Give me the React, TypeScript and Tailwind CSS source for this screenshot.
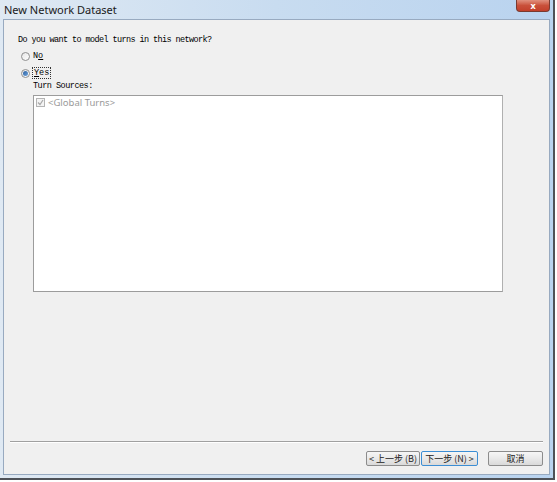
import React from "react";

const mono = { fontFamily: '"Liberation Mono", "DejaVu Sans Mono", monospace' };
const cjk = { fontFamily: '"Noto Sans CJK SC", "Noto Sans", sans-serif' };
const ui = { fontFamily: '"Noto Sans", "Open Sans", "Liberation Sans", sans-serif' };

function Radio({ checked }: { checked?: boolean }) {
  return (
    <div className="w-[9px] h-[9px] rounded-full border border-[#8f8f8f] bg-gradient-to-br from-[#e6e6e6] to-[#ffffff] flex items-center justify-center">
      {checked && <div className="w-[5px] h-[5px] rounded-full bg-gradient-to-br from-[#2a5fa0] to-[#6fa4dc]" />}
    </div>
  );
}

function Btn({ children, focused, w }: { children: React.ReactNode; focused?: boolean; w: string }) {
  return (
    <div
      className={`${w} h-[15px] rounded-[2px] border ${focused ? "border-[#3c8ed4]" : "border-[#8c8c8c]"} bg-gradient-to-b from-[#f6f6f6] via-[#e9e9e9] to-[#d9d9d9] flex items-center justify-center text-[9px] text-[#222] leading-none`}
      style={cjk}
    >
      {children}
    </div>
  );
}

export default function App() {
  return (
    <div className="w-[557px] h-[482px] bg-white overflow-hidden">
      <div className="w-[555px] h-[480px] bg-[#4e5258] pr-[2px] pb-[2px]">
        <div className="w-[553px] h-[478px] flex flex-col bg-gradient-to-r from-[#dfe9f3] via-[#c8dcf0] to-[#b9d3ef] px-[3px] pb-[3px]">
          {/* title bar */}
          <div className="h-[19px] flex items-start relative">
            <div className="text-[11px] text-[#1a1a1a] leading-none pt-[4px] pl-[1px]" style={ui}>
              New Network Dataset
            </div>
            <div className="absolute right-[0px] top-0 w-[34px] h-[12px] rounded-b-[4px] border border-t-0 border-[#7a3a30] bg-gradient-to-b from-[#e0907e] via-[#c9503a] to-[#c2402b] flex items-center justify-center">
              <span className="text-white text-[9px] font-bold leading-none" style={ui}>x</span>
            </div>
          </div>
          {/* content */}
          <div className="flex-1 bg-[#f0f0f0] border border-[#98aac0] flex flex-col">
            <div className="pl-[14px] pt-[14px] h-[26px] flex items-center text-[8.5px] tracking-[-0.6px] text-[#000]" style={mono}>
              Do you want to model turns in this network?
            </div>
            <div className="mt-[4px] h-[12px] pl-[17px] flex items-center gap-[3px]">
              <Radio />
              <span className="text-[8.5px] text-[#000]" style={mono}>
                N<span className="underline">o</span>
              </span>
            </div>
            <div className="mt-[5px] h-[12px] pl-[17px] flex items-center gap-[2px]">
              <Radio checked />
              <span className="text-[8.5px] text-[#000] border border-dotted border-[#333] px-[1px] leading-[10px]" style={mono}>
                <span className="underline">Y</span>es
              </span>
            </div>
            <div className="mt-[1px] h-[12px] pl-[29px] flex items-center text-[8.5px] tracking-[-0.5px] text-[#000]" style={mono}>
              Turn Sources:
            </div>
            <div className="mt-[3px] ml-[29px] w-[470px] h-[197px] bg-white border border-[#9c9c9c] border-r-[#b0b0b0]">
              <div className="flex items-center gap-[3px] pl-[2px] pt-[2px]">
                <div className="w-[9px] h-[9px] border border-[#b4b4b4] bg-[#f4f4f4] flex items-center justify-center">
                  <svg width="7" height="7" viewBox="0 0 7 7">
                    <path d="M1 3.5 L3 5.5 L6 1" stroke="#a8a8a8" strokeWidth="1.2" fill="none" />
                  </svg>
                </div>
                <span className="text-[9.5px] text-[#9a9a9a] leading-none" style={ui}>
                  &lt;Global Turns&gt;
                </span>
              </div>
            </div>
            <div className="flex-1" />
            <div className="mx-[6px] h-[2px] border-t border-[#a0a0a0] border-b border-b-white" />
            <div className="mt-[8px] mb-[8px] flex items-center pr-[6px] justify-end">
              <Btn w="w-[54px]">&lt; 上一步 (B)</Btn>
              <div className="w-[1px]" />
              <Btn w="w-[57px]" focused>
                下一步 (N) &gt;
              </Btn>
              <div className="w-[10px]" />
              <Btn w="w-[55px]">取消</Btn>
            </div>
          </div>
        </div>
      </div>
    </div>
  );
}
